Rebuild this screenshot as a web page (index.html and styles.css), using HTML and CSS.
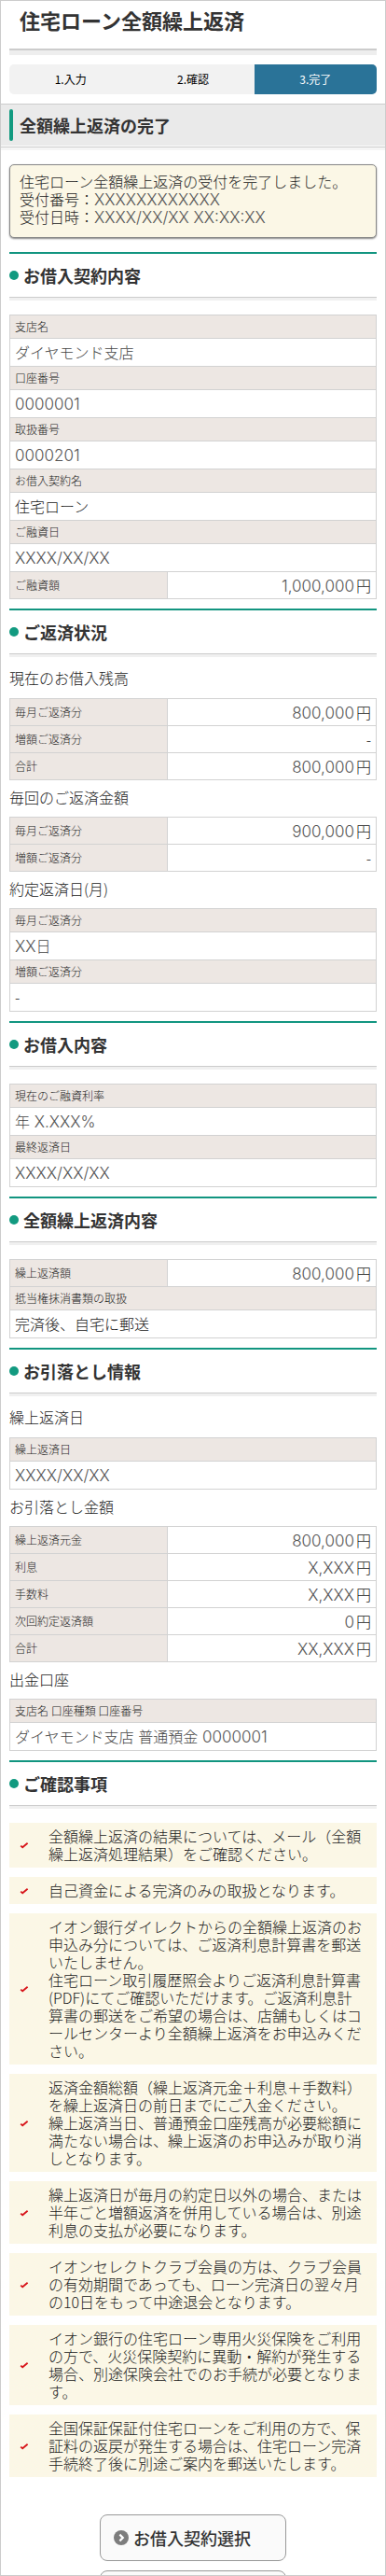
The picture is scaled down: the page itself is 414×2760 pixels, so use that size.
FILE: index.html
```
<!DOCTYPE html>
<html lang="ja">
<head>
<meta charset="utf-8">
<meta name="viewport" content="width=device-width, initial-scale=1">
<title>住宅ローン全額繰上返済</title>
<link rel="stylesheet" href="styles.css">
</head>
<body>
<svg class="defs" aria-hidden="true">
  <symbol id="check" viewBox="0 0 10 8"><path d="M1.2 4.6 L3.2 6.3 L8.6 1.8" fill="none" stroke="#d7141a" stroke-width="1.8"/></symbol>
</svg>
<main class="screen">
  <h1 class="page-title">住宅ローン全額繰上返済</h1>
  <ol class="steps">
    <li class="step">1.入力</li>
    <li class="step">2.確認</li>
    <li class="step step-current" aria-current="step">3.完了</li>
  </ol>
  <h2 class="section-bar"><span class="section-mark">全額繰上返済の完了</span></h2>

  <div class="content">
    <p class="notice">住宅ローン全額繰上返済の受付を完了しました。<br>受付番号：<span class="num">XXXXXXXXXXXX</span><br>受付日時：<span class="num">XXXX/XX/XX XX:XX:XX</span></p>

    <h3 class="heading">お借入契約内容</h3>
    <table class="data spaced">
      <colgroup><col class="col-label"><col></colgroup>
      <tr><th colspan="2">支店名</th></tr>
      <tr><td colspan="2" class="soft">ダイヤモンド支店</td></tr>
      <tr><th colspan="2">口座番号</th></tr>
      <tr><td colspan="2"><span class="num">0000001</span></td></tr>
      <tr><th colspan="2">取扱番号</th></tr>
      <tr><td colspan="2"><span class="num">0000201</span></td></tr>
      <tr><th colspan="2">お借入契約名</th></tr>
      <tr><td colspan="2">住宅ローン</td></tr>
      <tr><th colspan="2">ご融資日</th></tr>
      <tr><td colspan="2"><span class="num">XXXX/XX/XX</span></td></tr>
      <tr><th scope="row">ご融資額</th><td class="amount"><span class="num">1,000,000</span>円</td></tr>
    </table>

    <h3 class="heading">ご返済状況</h3>
    <h4 class="subheading lead">現在のお借入残高</h4>
    <table class="data">
      <colgroup><col class="col-label"><col></colgroup>
      <tr><th scope="row">毎月ご返済分</th><td class="amount"><span class="num">800,000</span>円</td></tr>
      <tr><th scope="row">増額ご返済分</th><td class="amount">-</td></tr>
      <tr><th scope="row">合計</th><td class="amount"><span class="num">800,000</span>円</td></tr>
    </table>
    <h4 class="subheading">毎回のご返済金額</h4>
    <table class="data">
      <colgroup><col class="col-label"><col></colgroup>
      <tr><th scope="row">毎月ご返済分</th><td class="amount"><span class="num">900,000</span>円</td></tr>
      <tr><th scope="row">増額ご返済分</th><td class="amount">-</td></tr>
    </table>
    <h4 class="subheading">約定返済日(月)</h4>
    <table class="data">
      <tr><th>毎月ご返済分</th></tr>
      <tr><td class="soft"><span class="num">XX</span>日</td></tr>
      <tr><th>増額ご返済分</th></tr>
      <tr><td>-</td></tr>
    </table>

    <h3 class="heading">お借入内容</h3>
    <table class="data spaced">
      <tr><th>現在のご融資利率</th></tr>
      <tr><td class="soft">年<span class="num"> X.XXX%</span></td></tr>
      <tr><th>最終返済日</th></tr>
      <tr><td><span class="num">XXXX/XX/XX</span></td></tr>
    </table>

    <h3 class="heading">全額繰上返済内容</h3>
    <table class="data spaced">
      <colgroup><col class="col-label"><col></colgroup>
      <tr><th scope="row">繰上返済額</th><td class="amount"><span class="num">800,000</span>円</td></tr>
      <tr><th colspan="2">抵当権抹消書類の取扱</th></tr>
      <tr><td colspan="2">完済後、自宅に郵送</td></tr>
    </table>

    <h3 class="heading">お引落とし情報</h3>
    <h4 class="subheading lead">繰上返済日</h4>
    <table class="data">
      <tr><th>繰上返済日</th></tr>
      <tr><td><span class="num">XXXX/XX/XX</span></td></tr>
    </table>
    <h4 class="subheading">お引落とし金額</h4>
    <table class="data">
      <colgroup><col class="col-label"><col></colgroup>
      <tr><th scope="row">繰上返済元金</th><td class="amount"><span class="num">800,000</span>円</td></tr>
      <tr><th scope="row">利息</th><td class="amount"><span class="num">X,XXX</span>円</td></tr>
      <tr><th scope="row">手数料</th><td class="amount"><span class="num">X,XXX</span>円</td></tr>
      <tr><th scope="row">次回約定返済額</th><td class="amount"><span class="num">0</span>円</td></tr>
      <tr><th scope="row">合計</th><td class="amount"><span class="num">XX,XXX</span>円</td></tr>
    </table>
    <h4 class="subheading">出金口座</h4>
    <table class="data">
      <tr><th>支店名 口座種類 口座番号</th></tr>
      <tr><td class="soft">ダイヤモンド支店<span class="num"> </span>普通預金<span class="num"> 0000001</span></td></tr>
    </table>

    <h3 class="heading">ご確認事項</h3>
    <ul class="notes">
      <li class="note"><svg class="check"><use href="#check"/></svg><p>全額繰上返済の結果については、メール（全額繰上返済処理結果）をご確認ください。</p></li>
      <li class="note"><svg class="check"><use href="#check"/></svg><p>自己資金による完済のみの取扱となります。</p></li>
      <li class="note"><svg class="check"><use href="#check"/></svg><p>イオン銀行ダイレクトからの全額繰上返済のお申込み分については、ご返済利息計算書を郵送いたしません。<br>住宅ローン取引履歴照会よりご返済利息計算書(PDF)にてご確認いただけます。ご返済利息計算書の郵送をご希望の場合は、店舗もしくはコールセンターより全額繰上返済をお申込みください。</p></li>
      <li class="note"><svg class="check"><use href="#check"/></svg><p>返済金額総額（繰上返済元金＋利息＋手数料）を繰上返済日の前日までにご入金ください。<br>繰上返済当日、普通預金口座残高が必要総額に満たない場合は、繰上返済のお申込みが取り消しとなります。</p></li>
      <li class="note"><svg class="check"><use href="#check"/></svg><p>繰上返済日が毎月の約定日以外の場合、または半年ごと増額返済を併用している場合は、別途利息の支払が必要になります。</p></li>
      <li class="note"><svg class="check"><use href="#check"/></svg><p>イオンセレクトクラブ会員の方は、クラブ会員の有効期間であっても、ローン完済日の翌々月の10日をもって中途退会となります。</p></li>
      <li class="note"><svg class="check"><use href="#check"/></svg><p>イオン銀行の住宅ローン専用火災保険をご利用の方で、火災保険契約に異動・解約が発生する場合、別途保険会社でのお手続が必要となります。</p></li>
      <li class="note"><svg class="check"><use href="#check"/></svg><p>全国保証保証付住宅ローンをご利用の方で、保証料の返戻が発生する場合は、住宅ローン完済手続終了後に別途ご案内を郵送いたします。</p></li>
    </ul>

    <div class="actions">
      <button type="button" class="button"><svg class="arrow" viewBox="0 0 16 16" aria-hidden="true"><circle cx="8" cy="8" r="8" fill="#7d7d7d"/><path d="M6.4 4.6 L9.8 8 L6.4 11.4" fill="none" stroke="#fff" stroke-width="2.2"/></svg>お借入契約選択</button>
      <button type="button" class="button" aria-label="戻る"></button>
    </div>
  </div>
</main>
</body>
</html>
```
FILE: styles.css
```
* { box-sizing: border-box; }

body {
  margin: 0;
  background: #fff;
  color: #222;
  font-family: "Noto Sans CJK JP", sans-serif;
  font-size: 16px;
  font-weight: 300;
  line-height: 19px;
}

h1, h2, h3, h4, p, ol, ul { margin: 0; padding: 0; }
ol, ul { list-style: none; }

.defs { display: none; }

.screen {
  height: 100vh;
  overflow-y: auto;
  scrollbar-width: none;
  border: 1px solid #ccc;
}

.page-title {
  margin: 0 9px;
  padding: 5px 11px 16px;
  border-bottom: 2px solid #ccc;
  box-shadow: 0 5px 0 #eee;
  color: #333;
  font-size: 22px;
  font-weight: 700;
  line-height: 30px;
}

.steps {
  display: grid;
  grid-template-columns: repeat(3, 1fr);
  margin: 15px 9px 10px;
  border-radius: 5px;
  overflow: hidden;
  background: #f2f2f2;
  color: #000;
  font-size: 12px;
  font-weight: 400;
  line-height: 32px;
  text-align: center;
}

.step-current { background: #2a7398; color: #fff; }

.section-bar {
  padding: 5px 9px 4px;
  border-top: 1px solid #ccc;
  border-bottom: 1px solid #ccc;
  background: #eaeaea;
  box-shadow: inset 0 -1px 0 #fff, 0 3px 0 #f5f5f5;
  color: #333;
  font-size: 18px;
  font-weight: 700;
  line-height: 34px;
}

.section-mark { display: flex; padding-bottom: 2px; }

.section-mark::before {
  content: "";
  width: 4px;
  height: 34px;
  margin-right: 7px;
  border-radius: 2px;
  background: #129a80;
}

.content { padding: 0 9px; }

.notice {
  margin: 18px 0 15px;
  padding: 8px 10px 12px;
  border: 1px solid #888;
  border-radius: 5px;
  background: #fbf7e6;
  box-shadow: 0 1px 2px #888;
}

.num {
  color: #555;
  font-family: Inter, "Noto Sans CJK JP", sans-serif;
  font-size: 17px;
  line-height: 0;
}

.heading {
  display: flex;
  align-items: center;
  gap: 5px;
  margin-top: 10px;
  margin-bottom: 3px;
  border-top: 2px solid #129580;
  border-bottom: 1px solid #ccc;
  box-shadow: 0 3px 0 #f0f0f0;
  color: #333;
  font-size: 18px;
  font-weight: 700;
  line-height: 46px;
}

.heading::before {
  content: "";
  width: 10px;
  height: 10px;
  border-radius: 50%;
  background: #129a80;
}

.subheading {
  padding: 9px 0 11px;
  font-size: 16px;
  font-weight: 300;
  line-height: 19px;
}

.lead { padding: 13px 0 12px; }

.data {
  width: 100%;
  border-collapse: collapse;
  table-layout: fixed;
}

.spaced { margin-top: 18px; }
.col-label { width: 43%; }

.data th,
.data td {
  padding: 5px;
  border: 1px solid #d2d2d2;
  text-align: left;
}

.data th {
  background: #ede7e3;
  font-size: 12px;
  font-weight: 300;
  line-height: 14px;
}

.data td { line-height: 19px; }
.data td.amount { text-align: right; line-height: 18px; }
.amount .num { margin-right: 2px; }
.data td.soft { color: #444; }

.notes {
  display: flex;
  flex-direction: column;
  gap: 10px;
  padding-top: 15px;
}

.note {
  display: flex;
  align-items: center;
  gap: 21px;
  padding: 5px 15px 5px 11px;
  background: #fbf7e6;
}

.note p { flex: 1; }
.check { width: 10px; height: 8px; }

.actions {
  display: flex;
  flex-direction: column;
  align-items: center;
  gap: 10px;
  padding: 40px 0 10px;
}

.button {
  display: flex;
  align-items: center;
  gap: 5px;
  width: 200px;
  height: 50px;
  flex: none;
  padding: 0 14px;
  border: 1px solid #999;
  border-radius: 8px;
  background: #fafafa;
  color: #333;
  font-family: inherit;
  font-size: 18px;
  font-weight: 500;
}

.arrow { width: 16px; height: 16px; }
```
